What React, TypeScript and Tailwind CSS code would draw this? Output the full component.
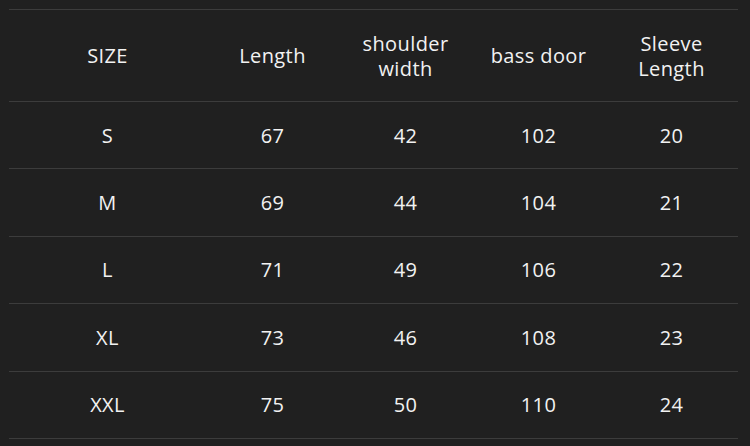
import React from "react";

const rows = [
  ["S", "67", "42", "102", "20"],
  ["M", "69", "44", "104", "21"],
  ["L", "71", "49", "106", "22"],
  ["XL", "73", "46", "108", "23"],
  ["XXL", "75", "50", "110", "24"],
];

const cols = "grid grid-cols-[197px_133px_133px_133px_133px]";

export default function App() {
  return (
    <div
      className="w-[750px] h-[446px] bg-[#202020] text-[#f2f2f2] pt-[9px] pl-[9px]"
      style={{ fontFamily: '"Open Sans", "Noto Sans", sans-serif' }}
    >
      <div className="w-[729px] border-t border-[#3c3c3c] text-[20px] tracking-[0.4px] leading-[25px]">
        <div className={`${cols} h-[92px] border-b border-[#3c3c3c] items-center text-center`}>
          <div>SIZE</div>
          <div>Length</div>
          <div>
            shoulder
            <br />
            width
          </div>
          <div>bass door</div>
          <div>
            Sleeve
            <br />
            Length
          </div>
        </div>
        {rows.map((r) => (
          <div
            key={r[0]}
            className={`${cols} h-[67.4px] border-b border-[#3c3c3c] items-center text-center`}
          >
            {r.map((c, i) => (
              <div key={i}>{c}</div>
            ))}
          </div>
        ))}
      </div>
    </div>
  );
}
